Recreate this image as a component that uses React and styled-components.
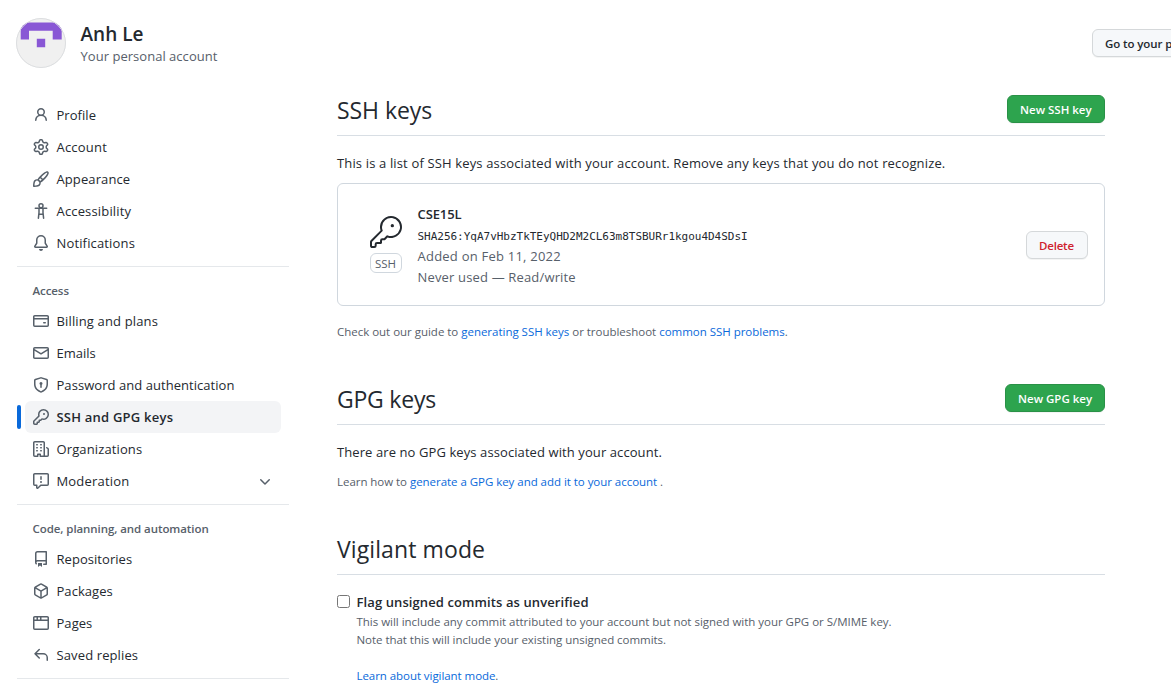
import React from "react";
import styled, { createGlobalStyle } from "styled-components";

const Global = createGlobalStyle`
  * { box-sizing: border-box; }
  body {
    margin: 0;
    background: #fff;
    color: #24292f;
    font-family: "Open Sans", "Noto Sans", sans-serif;
    font-size: 13px;
    overflow: hidden;
  }
  h1, h2, h3, p, ul { margin: 0; padding: 0; font-weight: 400; }
  ul { list-style: none; }
`;

/* ---------- icons ---------- */
const Svg = styled.svg`
  flex: none;
  display: block;
  width: ${(p) => p.$size || 16}px;
  height: ${(p) => p.$size || 16}px;
  fill: currentColor;
  color: ${(p) => p.$color || "#57606a"};
`;

const paths = {
  person: "M10.5 5a2.5 2.5 0 11-5 0 2.5 2.5 0 015 0zm.061 3.073a4 4 0 10-5.123 0 6.004 6.004 0 00-3.431 5.142.75.75 0 001.498.07 4.5 4.5 0 018.99 0 .75.75 0 101.498-.07 6.005 6.005 0 00-3.432-5.142z",
  gear: "M7.429 1.525a6.593 6.593 0 011.142 0c.036.003.108.036.137.146l.289 1.105c.147.56.55.967.997 1.189.174.086.341.183.501.29.417.278.97.423 1.53.27l1.102-.303c.11-.03.175.016.195.046.219.31.41.641.573.989.014.031.022.11-.059.19l-.815.806c-.411.406-.562.957-.53 1.456a4.588 4.588 0 010 .582c-.032.499.119 1.05.53 1.456l.815.806c.08.08.073.159.059.19a6.494 6.494 0 01-.573.99c-.02.029-.086.074-.195.045l-1.103-.303c-.559-.153-1.112-.008-1.529.27-.16.107-.327.204-.5.29-.449.222-.851.628-.998 1.189l-.289 1.105c-.029.11-.101.143-.137.146a6.613 6.613 0 01-1.142 0c-.036-.003-.108-.037-.137-.146l-.289-1.105c-.147-.56-.55-.967-.997-1.189a4.502 4.502 0 01-.501-.29c-.417-.278-.97-.423-1.53-.27l-1.102.303c-.11.03-.175-.016-.195-.046a6.492 6.492 0 01-.573-.989c-.014-.031-.022-.11.059-.19l.815-.806c.411-.406.562-.957.53-1.456a4.587 4.587 0 010-.582c.032-.499-.119-1.05-.53-1.456l-.815-.806c-.08-.08-.073-.159-.059-.19a6.44 6.44 0 01.573-.99c.02-.029.086-.075.195-.045l1.103.303c.559.153 1.112.008 1.529-.27.16-.107.327-.204.5-.29.449-.222.851-.628.998-1.189l.289-1.105c.029-.11.101-.143.137-.146zM8 0c-.236 0-.47.01-.701.03-.743.065-1.29.615-1.458 1.261l-.29 1.106c-.017.066-.078.158-.211.224a5.994 5.994 0 00-.668.386c-.123.082-.233.09-.3.071L3.27 2.776c-.644-.177-1.392.02-1.82.63a7.977 7.977 0 00-.704 1.217c-.315.675-.111 1.422.363 1.891l.815.806c.05.048.098.147.088.294a6.084 6.084 0 000 .772c.01.147-.038.246-.088.294l-.815.806c-.474.469-.678 1.216-.363 1.891.2.428.436.835.704 1.218.428.609 1.176.806 1.82.63l1.103-.303c.066-.019.176-.011.299.071.213.143.436.272.668.386.133.066.194.158.212.224l.289 1.106c.169.646.715 1.196 1.458 1.26a8.094 8.094 0 001.402 0c.743-.064 1.29-.614 1.458-1.26l.29-1.106c.017-.066.078-.158.211-.224a5.98 5.98 0 00.668-.386c.123-.082.233-.09.3-.071l1.102.302c.644.177 1.392-.02 1.82-.63.268-.382.505-.789.704-1.217.315-.675.111-1.422-.364-1.891l-.814-.806c-.05-.048-.098-.147-.088-.294a6.1 6.1 0 000-.772c-.01-.147.039-.246.088-.294l.814-.806c.475-.469.679-1.216.364-1.891a7.992 7.992 0 00-.704-1.218c-.428-.609-1.176-.806-1.82-.63l-1.103.303c-.066.019-.176.011-.299-.071a5.991 5.991 0 00-.668-.386c-.133-.066-.194-.158-.212-.224L10.16 1.29C9.99.645 9.444.095 8.701.031A8.094 8.094 0 008 0zm1.5 8a1.5 1.5 0 11-3 0 1.5 1.5 0 013 0zM11 8a3 3 0 11-6 0 3 3 0 016 0z",
  paintbrush: "M11.134 1.535C9.722 2.562 8.16 4.057 6.889 5.312 5.8 6.387 5.041 7.401 4.575 8.294a3.745 3.745 0 00-3.227 1.054c-.43.431-.69 1.066-.86 1.657a11.982 11.982 0 00-.358 1.914A21.263 21.263 0 000 15.203v.054l.75-.007-.007.75h.054a14.404 14.404 0 00.654-.012 21.243 21.243 0 001.63-.118c.62-.07 1.3-.18 1.914-.357.592-.17 1.226-.43 1.657-.861a3.745 3.745 0 001.055-3.217c.908-.461 1.942-1.216 3.04-2.3 1.279-1.262 2.764-2.825 3.775-4.249.501-.706.923-1.428 1.125-2.096.2-.659.235-1.469-.368-2.07-.606-.607-1.42-.55-2.069-.34-.66.213-1.376.646-2.076 1.155zm-3.95 8.48a3.76 3.76 0 00-1.19-1.192 9.758 9.758 0 011.161-1.607l1.658 1.658a9.853 9.853 0 01-1.63 1.142zM.742 16l.007-.75-.75.008A.75.75 0 00.743 16zM12.016 2.749c-1.224.89-2.605 2.189-3.822 3.384l1.718 1.718c1.21-1.205 2.51-2.597 3.387-3.833.47-.662.78-1.227.912-1.662.134-.444.032-.551.009-.575h-.001V1.78c-.014-.014-.112-.113-.548.027-.432.14-.995.462-1.655.942zM1.62 13.089a19.56 19.56 0 00-.104 1.395 19.55 19.55 0 001.396-.104 10.528 10.528 0 001.668-.309c.526-.151.856-.325 1.011-.48a2.25 2.25 0 00-3.182-3.182c-.155.155-.329.485-.48 1.01a10.515 10.515 0 00-.309 1.67z",
  bell: "M8 16a2 2 0 001.985-1.75c.017-.137-.097-.25-.235-.25h-3.5c-.138 0-.252.113-.235.25A2 2 0 008 16zM8 1.5A3.5 3.5 0 004.5 5v2.947c0 .346-.102.683-.294.97l-1.703 2.556a.018.018 0 00-.003.01l.001.006c0 .002.002.004.004.006a.017.017 0 00.006.004l.007.001h10.964l.007-.001a.016.016 0 00.006-.004.016.016 0 00.004-.006l.001-.007a.017.017 0 00-.003-.01l-1.703-2.554a1.75 1.75 0 01-.294-.97V5A3.5 3.5 0 008 1.5zM3 5a5 5 0 0110 0v2.947c0 .05.015.098.042.139l1.703 2.555A1.518 1.518 0 0113.482 13H2.518a1.518 1.518 0 01-1.263-2.36l1.703-2.554A.25.25 0 003 7.947V5z",
  card: "M10.75 9a.75.75 0 000 1.5h1.5a.75.75 0 000-1.5h-1.5zM0 3.75C0 2.784.784 2 1.75 2h12.5c.966 0 1.75.784 1.75 1.75v8.5A1.75 1.75 0 0114.25 14H1.75A1.75 1.75 0 010 12.25v-8.5zm14.5 0V5h-13V3.75a.25.25 0 01.25-.25h12.5a.25.25 0 01.25.25zm0 2.75h-13v5.75c0 .138.112.25.25.25h12.5a.25.25 0 00.25-.25V6.5z",
  mail: "M1.75 2A1.75 1.75 0 000 3.75v.736a.75.75 0 000 .027v7.737C0 13.216.784 14 1.75 14h12.5A1.75 1.75 0 0016 12.25v-8.5A1.75 1.75 0 0014.25 2H1.75zM14.5 4.07v-.32a.25.25 0 00-.25-.25H1.75a.25.25 0 00-.25.25v.32L8 7.88l6.5-3.81zm-13 1.74v6.441c0 .138.112.25.25.25h12.5a.25.25 0 00.25-.25V5.809L8.38 9.397a.75.75 0 01-.76 0L1.5 5.809z",
  shield: "M7.467.133a1.75 1.75 0 011.066 0l5.25 1.68A1.75 1.75 0 0115 3.48V7c0 1.566-.32 3.182-1.303 4.682-.983 1.498-2.585 2.813-5.032 3.855a1.7 1.7 0 01-1.33 0c-2.447-1.042-4.049-2.357-5.032-3.855C1.32 10.182 1 8.566 1 7V3.48a1.75 1.75 0 011.217-1.667l5.25-1.68zm.61 1.429a.25.25 0 00-.153 0l-5.25 1.68a.25.25 0 00-.174.238V7c0 1.358.275 2.666 1.057 3.86.784 1.194 2.121 2.34 4.366 3.297a.2.2 0 00.154 0c2.245-.956 3.582-2.104 4.366-3.298C13.225 9.666 13.5 8.36 13.5 7V3.48a.25.25 0 00-.174-.237l-5.25-1.68zM9.5 6.5a1.5 1.5 0 01-.75 1.3v2.45a.75.75 0 01-1.5 0V7.8A1.5 1.5 0 119.5 6.5z",
  key: "M6.5 5.5a4 4 0 112.731 3.795.75.75 0 00-.768.18L7.44 10.5H6.25a.75.75 0 00-.75.75v1.19l-.06.06H4.25a.75.75 0 00-.75.75v1.19l-.06.06H1.75a.25.25 0 01-.25-.25v-1.69l5.024-5.023a.75.75 0 00.181-.768A3.995 3.995 0 016.5 5.5zm4-5.5a5.5 5.5 0 00-5.348 6.788L.22 11.72a.75.75 0 00-.22.53v2C0 15.216.784 16 1.75 16h2a.75.75 0 00.53-.22l.5-.5a.75.75 0 00.22-.53V14h.75a.75.75 0 00.53-.22l.5-.5a.75.75 0 00.22-.53V12h.75a.75.75 0 00.53-.22l.932-.932A5.5 5.5 0 1010.5 0zm.5 6a1 1 0 100-2 1 1 0 000 2z",
  organization: "M1.5 14.25c0 .138.112.25.25.25H4v-1.25a.75.75 0 01.75-.75h2.5a.75.75 0 01.75.75v1.25h2.25a.25.25 0 00.25-.25V1.75a.25.25 0 00-.25-.25h-8.5a.25.25 0 00-.25.25v12.5zM1.75 16A1.75 1.75 0 010 14.25V1.75C0 .784.784 0 1.75 0h8.5C11.216 0 12 .784 12 1.75v12.5c0 .085-.006.168-.018.25h2.268a.25.25 0 00.25-.25V8.285a.25.25 0 00-.111-.208l-1.055-.703a.75.75 0 11.832-1.248l1.055.703c.487.325.779.871.779 1.456v5.965A1.75 1.75 0 0114.25 16h-3.5a.75.75 0 01-.197-.026c-.099.017-.2.026-.303.026h-3a.75.75 0 01-.75-.75V14h-1v1.25a.75.75 0 01-.75.75h-3zM3 3.75A.75.75 0 013.75 3h.5a.75.75 0 010 1.5h-.5A.75.75 0 013 3.75zM3.75 6a.75.75 0 000 1.5h.5a.75.75 0 000-1.5h-.5zM3 9.75A.75.75 0 013.75 9h.5a.75.75 0 010 1.5h-.5A.75.75 0 013 9.75zM7.75 9a.75.75 0 000 1.5h.5a.75.75 0 000-1.5h-.5zM7 6.75A.75.75 0 017.75 6h.5a.75.75 0 010 1.5h-.5A.75.75 0 017 6.75zM7.75 3a.75.75 0 000 1.5h.5a.75.75 0 000-1.5h-.5z",
  report: "M1.75 1.5a.25.25 0 00-.25.25v9.5c0 .138.112.25.25.25h2a.75.75 0 01.75.75v2.19l2.72-2.72a.75.75 0 01.53-.22h6.5a.25.25 0 00.25-.25v-9.5a.25.25 0 00-.25-.25H1.75zM0 1.75C0 .784.784 0 1.75 0h12.5C15.216 0 16 .784 16 1.75v9.5A1.75 1.75 0 0114.25 13H8.06l-2.573 2.573A1.457 1.457 0 013 14.543V13H1.75A1.75 1.75 0 010 11.25v-9.5zM9 9a1 1 0 11-2 0 1 1 0 012 0zm-.25-5.25a.75.75 0 00-1.5 0v2.5a.75.75 0 001.5 0v-2.5z",
  repo: "M2 2.5A2.5 2.5 0 014.5 0h8.75a.75.75 0 01.75.75v12.5a.75.75 0 01-.75.75h-2.5a.75.75 0 110-1.5h1.75v-2h-8a1 1 0 00-.714 1.7.75.75 0 01-1.072 1.05A2.495 2.495 0 012 11.5v-9zm10.5-1V9h-8c-.356 0-.694.074-1 .208V2.5a1 1 0 011-1h8zM5 12.25v3.25a.25.25 0 00.4.2l1.45-1.087a.25.25 0 01.3 0L8.6 15.7a.25.25 0 00.4-.2v-3.25a.25.25 0 00-.25-.25h-3.5a.25.25 0 00-.25.25z",
  package: "M8.878.392a1.75 1.75 0 00-1.756 0l-5.25 3.045A1.75 1.75 0 001 4.951v6.098c0 .624.332 1.2.872 1.514l5.25 3.045a1.75 1.75 0 001.756 0l5.25-3.045c.54-.313.872-.89.872-1.514V4.951c0-.624-.332-1.2-.872-1.514L8.878.392zM7.875 1.69a.25.25 0 01.25 0l4.63 2.685L8 7.133 3.245 4.375l4.63-2.685zM2.5 5.677v5.372c0 .09.047.171.125.216l4.625 2.683V8.432L2.5 5.677zm6.25 8.271l4.625-2.683a.25.25 0 00.125-.216V5.677L8.75 8.432v5.516z",
  browser: "M0 2.75C0 1.784.784 1 1.75 1h12.5c.966 0 1.75.784 1.75 1.75v10.5A1.75 1.75 0 0114.25 15H1.75A1.75 1.75 0 010 13.25V2.75zm1.75-.25a.25.25 0 00-.25.25V4.5h2v-2H1.75zM5 2.5v2h2v-2H5zm3.5 0v2h6V2.75a.25.25 0 00-.25-.25H8.5zm6 3.5h-13v7.25c0 .138.112.25.25.25h12.5a.25.25 0 00.25-.25V6z",
  reply: "M6.78 1.97a.75.75 0 010 1.06L3.81 6h6.44A4.75 4.75 0 0115 10.75v2.5a.75.75 0 01-1.5 0v-2.5a3.25 3.25 0 00-3.25-3.25H3.81l2.97 2.97a.75.75 0 11-1.06 1.06L1.47 7.28a.75.75 0 010-1.06l4.25-4.25a.75.75 0 011.06 0z",
  chevron: "M12.78 6.22a.75.75 0 010 1.06l-4.25 4.25a.75.75 0 01-1.06 0L3.22 7.28a.75.75 0 011.06-1.06L8 9.94l3.72-3.72a.75.75 0 011.06 0z",
};

const Icon = ({ name }) => (
  <Svg viewBox="0 0 16 16" aria-hidden="true">
    {name === "accessibility" ? (
      <g fill="none" stroke="currentColor" strokeWidth="1.5" strokeLinecap="round" strokeLinejoin="round">
        <circle cx="8" cy="2.75" r="2" />
        <path d="M2.3 5.2h11.4M6 5.4v4.2L5.4 15.2M10 5.4v4.2l.6 5.6M6.1 11.2h3.8" />
      </g>
    ) : (
      <path fillRule="evenodd" d={paths[name]} />
    )}
  </Svg>
);

const BigKey = () => (
  <Svg viewBox="0 0 24 24" $size={32} $color="#24292f" aria-hidden="true">
    <path d="M16.75 8.5a1.25 1.25 0 100-2.5 1.25 1.25 0 000 2.5z" />
    <path
      fillRule="evenodd"
      d="M15.75 0a8.25 8.25 0 00-7.851 10.79L.513 18.178A1.75 1.75 0 000 19.414v2.836C0 23.217.784 24 1.75 24h1.5A1.75 1.75 0 005 22.25v-1a.25.25 0 01.25-.25h2.735a.75.75 0 00.545-.22l.214-.213A.875.875 0 009 19.948V18.5a.25.25 0 01.25-.25h1.086c.464 0 .91-.184 1.237-.513l1.636-1.636A8.25 8.25 0 1015.75 0zM9 8.25a6.75 6.75 0 114.288 6.287.75.75 0 00-.804.168l-1.971 1.972a.25.25 0 01-.177.073H9.25A1.75 1.75 0 007.5 18.5v1H5.25a1.75 1.75 0 00-1.75 1.75v1a.25.25 0 01-.25.25h-1.5a.25.25 0 01-.25-.25v-2.836a.25.25 0 01.073-.177l7.722-7.721a.75.75 0 00.168-.804A6.73 6.73 0 019 8.25z"
    />
  </Svg>
);

/* ---------- shared parts ---------- */
const Label = styled.span`
  letter-spacing: ${(p) => p.$ls || 0}px;
`;

const Button = styled.button`
  flex: none;
  height: 28px;
  width: ${(p) => p.$width}px;
  padding: 2px 0 0 12px;
  border: 1px solid ${(p) => (p.$primary ? "#2a9147" : "#d5d8da")};
  border-radius: 6px;
  background: ${(p) => (p.$primary ? "#2da44e" : "#f6f8fa")};
  color: ${(p) => (p.$primary ? "#fff" : p.$danger ? "#cf222e" : "#24292f")};
  box-shadow: 0 1px 0 rgba(27, 31, 36, 0.05);
  font: 600 11.5px/20px "Open Sans", "Noto Sans", sans-serif;
  letter-spacing: ${(p) => p.$ls || 0}px;
  white-space: nowrap;
  text-align: left;
`;

const Link = styled.a`
  color: #0969da;
`;

/* ---------- page ---------- */
const Page = styled.div`
  width: 1171px;
  height: 684px;
  overflow: hidden;
`;

const Header = styled.header`
  display: flex;
  align-items: flex-start;
  height: 91px;
  padding: 18px 0 0 16px;
`;

const Avatar = styled.svg`
  width: 50px;
  height: 50px;
  flex: none;
`;

const Identity = styled.div`
  flex: 1;
  padding: 2px 0 0 14.5px;
`;

const Name = styled.h1`
  font-size: 19px;
  font-weight: 600;
  line-height: 28px;
`;

const Kind = styled.p`
  color: #57606a;
  line-height: 17px;
  letter-spacing: 0.03px;
`;

const HeaderAction = styled.div`
  flex: none;
  width: 79px;
  padding-top: 11px;
`;

const Columns = styled.div`
  display: flex;
  align-items: flex-start;
`;

const Sidebar = styled.nav`
  width: 272px;
  margin-left: 17px;
  padding-top: 8px;
  flex: none;
`;

const NavGroup = styled.section`
  padding-bottom: 7px;
  margin-bottom: 7px;
  border-bottom: 1px solid #e5e8eb;
`;

const NavHeading = styled.h3`
  padding: 8px 0 6px 15.5px;
  color: #57606a;
  font-size: 11.5px;
  font-weight: 600;
  line-height: 17px;
  letter-spacing: -0.07px;
`;

const NavItem = styled.li`
  position: relative;
  display: flex;
  align-items: center;
  gap: 7.5px;
  height: 32px;
  margin: 0 8px;
  padding: 0 8px;
  border-radius: 6px;
  background: ${(p) => (p.$active ? "#f3f4f6" : "transparent")};
  font-weight: ${(p) => (p.$active ? 600 : 400)};
  white-space: nowrap;

  &::before {
    content: "";
    display: ${(p) => (p.$active ? "block" : "none")};
    position: absolute;
    left: -8px;
    top: 4px;
    width: 4px;
    height: 24px;
    border-radius: 6px;
    background: #0969da;
  }

  ${Label} { flex: 1; }
`;

const Main = styled.main`
  width: 768px;
  margin-left: 48px;
`;

const SectionHead = styled.div`
  display: flex;
  justify-content: space-between;
  align-items: flex-start;
  height: 41px;
  margin-top: ${(p) => p.$top}px;
  border-bottom: 1px solid #d8dee4;
`;

const Title = styled.h2`
  font-size: 23px;
  line-height: 30px;
  letter-spacing: ${(p) => p.$ls || 0}px;
`;

const Text = styled.p`
  line-height: 20px;
  margin-top: ${(p) => p.$top}px;
  letter-spacing: ${(p) => p.$ls || 0}px;
  white-space: nowrap;
`;

const Small = styled(Text)`
  font-size: 11.5px;
  line-height: 18px;
  color: #57606a;
`;

const KeyCard = styled.div`
  display: flex;
  align-items: center;
  height: 123px;
  margin-top: 10px;
  padding: 0 16px 0 32px;
  border: 1px solid #d0d7de;
  border-radius: 6px;
`;

const KeyBadge = styled.div`
  display: flex;
  flex-direction: column;
  align-items: center;
  gap: 5px;
  width: 32px;
`;

const Tag = styled.span`
  width: 32px;
  height: 20px;
  padding-right: 1px;
  border: 1px solid #d0d7de;
  border-radius: 6px;
  color: #57606a;
  font-size: 11.5px;
  line-height: 19px;
  text-align: center;
`;

const KeyInfo = styled.div`
  flex: 1;
  padding: 2px 0 0 15.5px;
  line-height: 21px;
  white-space: nowrap;
`;

const KeyLine = styled.div`
  color: ${(p) => (p.$strong ? "#24292f" : "#57606a")};
  font-weight: ${(p) => (p.$strong ? 600 : 400)};
  letter-spacing: ${(p) => p.$ls || 0}px;
`;

const Fingerprint = styled.code`
  display: block;
  padding: 3px 0 1px;
  font: 11px/17px "DejaVu Sans Mono", monospace;
  letter-spacing: -0.02px;
`;

const Option = styled.div`
  display: flex;
  align-items: flex-start;
  gap: 6.5px;
  margin-top: 17px;
`;

const Checkbox = styled.input`
  width: 13px;
  height: 13px;
  margin: 3px 0 0;
  flex: none;
`;

const OptionTitle = styled.div`
  font-weight: 600;
  line-height: 20px;
  letter-spacing: 0.1px;
`;

const groups = [
  {
    items: [
      ["person", "Profile", 0.05],
      ["gear", "Account", 0.2],
      ["paintbrush", "Appearance", 0.1],
      ["accessibility", "Accessibility", 0.16],
      ["bell", "Notifications", 0.15],
    ],
  },
  {
    title: "Access",
    items: [
      ["card", "Billing and plans", 0.14],
      ["mail", "Emails", 0],
      ["shield", "Password and authentication", 0.05],
      ["key", "SSH and GPG keys", 0.22],
      ["organization", "Organizations", 0.12],
      ["report", "Moderation", 0.18],
    ],
  },
  {
    title: "Code, planning, and automation",
    items: [
      ["repo", "Repositories", 0.05],
      ["package", "Packages", 0.05],
      ["browser", "Pages", 0.05],
      ["reply", "Saved replies", 0.12],
    ],
  },
];

export default function App() {
  return (
    <Page>
      <Global />
      <Header>
        <Avatar viewBox="0 0 50 50">
          <defs>
            <clipPath id="round"><circle cx="25" cy="25" r="25" /></clipPath>
          </defs>
          <g clipPath="url(#round)">
            <rect width="50" height="50" fill="#f0f0f0" />
            <path fill="#8957d5" d="M4.7 4.5h41v17h-9v-8.7H13v8.7H4.700zM20.8 20.8h8.4v8.4h-8.4z" />
          </g>
          <circle cx="25" cy="25" r="24.5" fill="none" stroke="#dcdee0" />
        </Avatar>
        <Identity>
          <Name>Anh Le</Name>
          <Kind>Your personal account</Kind>
        </Identity>
        <HeaderAction>
          <Button $width={181} $ls={-0.1}>Go to your personal profile</Button>
        </HeaderAction>
      </Header>

      <Columns>
        <Sidebar>
          {groups.map((g, i) => (
            <NavGroup key={i}>
              {g.title && <NavHeading>{g.title}</NavHeading>}
              <ul>
                {g.items.map(([icon, label, ls]) => (
                  <NavItem key={label} $active={icon === "key"}>
                    <Icon name={icon} />
                    <Label $ls={ls}>{label}</Label>
                    {icon === "report" && <Icon name="chevron" />}
                  </NavItem>
                ))}
              </ul>
            </NavGroup>
          ))}
        </Sidebar>

        <Main>
          <SectionHead $top={4}>
            <Title $ls={-0.05}>SSH keys</Title>
            <Button $primary $width={98}>New SSH key</Button>
          </SectionHead>
          <Text $top={17} $ls={0.148}>
            This is a list of SSH keys associated with your account. Remove any keys that you do not recognize.
          </Text>
          <KeyCard>
            <KeyBadge>
              <BigKey />
              <Tag>SSH</Tag>
            </KeyBadge>
            <KeyInfo>
              <KeyLine $strong $ls={-0.1}>CSE15L</KeyLine>
              <Fingerprint>SHA256:YqA7vHbzTkTEyQHD2M2CL63m8TSBURr1kgou4D4SDsI</Fingerprint>
              <KeyLine $ls={0.23}>Added on Feb 11, 2022</KeyLine>
              <KeyLine $ls={0.16}>Never used — Read/write</KeyLine>
            </KeyInfo>
            <Button $danger $width={62} $ls={-0.2}>Delete</Button>
          </KeyCard>
          <Small $top={17} $ls={-0.02}>
            Check out our guide to <Link>generating SSH keys</Link> or troubleshoot <Link>common SSH problems</Link>.
          </Small>

          <SectionHead $top={43}>
            <Title $ls={-0.22}>GPG keys</Title>
            <Button $primary $width={100}>New GPG key</Button>
          </SectionHead>
          <Text $top={17} $ls={0.09}>There are no GPG keys associated with your account.</Text>
          <Small $top={11} $ls={-0.04}>
            Learn how to <Link>generate a GPG key and add it to your account</Link> .
          </Small>

          <SectionHead $top={43}>
            <Title $ls={0.1}>Vigilant mode</Title>
          </SectionHead>
          <Option>
            <Checkbox type="checkbox" />
            <div>
              <OptionTitle>Flag unsigned commits as unverified</OptionTitle>
              <Small $top={1} $ls={-0.02}>
                This will include any commit attributed to your account but not signed with your GPG or S/MIME key.
              </Small>
              <Small $top={0} $ls={-0.04}>Note that this will include your existing unsigned commits.</Small>
              <Small $top={18} $ls={-0.06}><Link>Learn about vigilant mode</Link>.</Small>
            </div>
          </Option>
        </Main>
      </Columns>
    </Page>
  );
}
